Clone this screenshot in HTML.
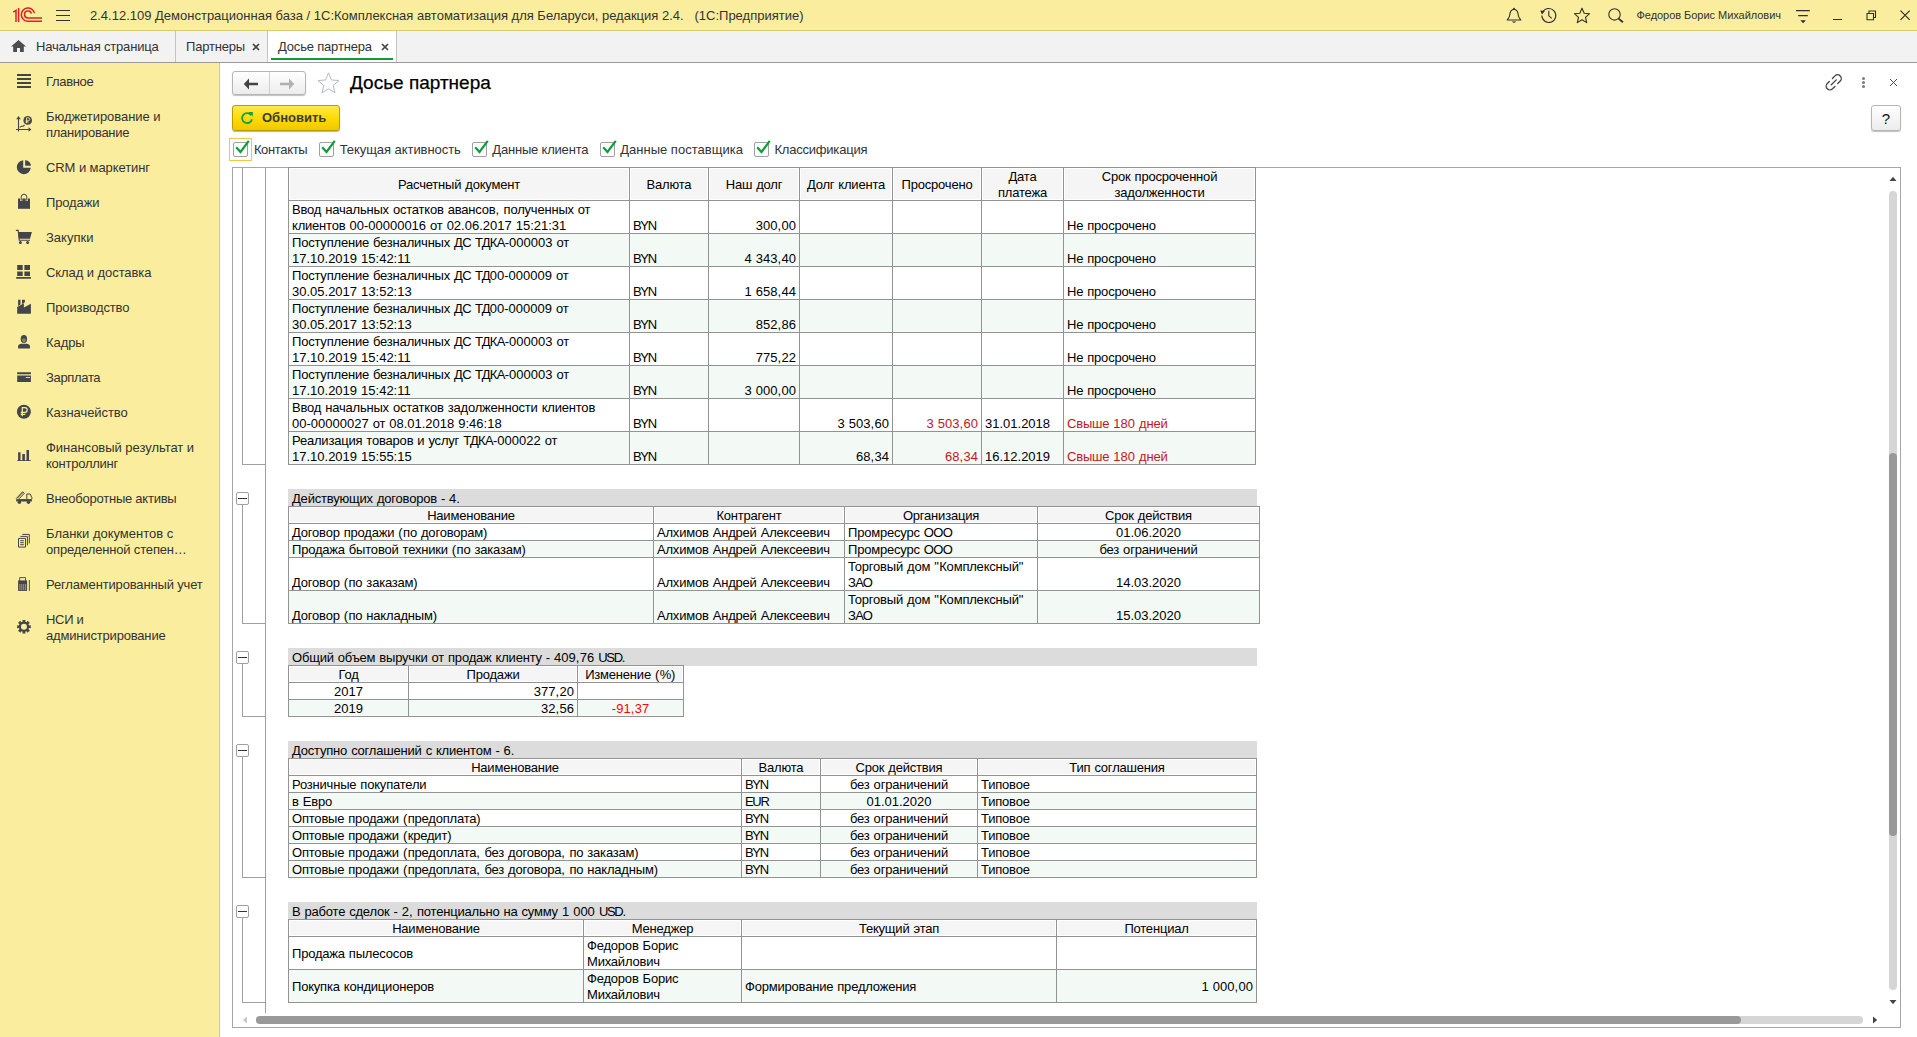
<!DOCTYPE html><html><head><meta charset="utf-8"><title>Досье партнера</title><style>
*{box-sizing:border-box;margin:0;padding:0}
html,body{width:1917px;height:1037px;overflow:hidden;background:#fff;font-family:"Liberation Sans",sans-serif;color:#333}
.abs{position:absolute}
#top{position:absolute;left:0;top:0;width:1917px;height:30px;background:#fbed9e}
#topline{position:absolute;left:0;top:30px;width:1917px;height:1px;background:#d9c977}
#tabs{position:absolute;left:0;top:31px;width:1917px;height:31px;background:#f2f2f2}
#tabsline{position:absolute;left:0;top:62px;width:1917px;height:1px;background:#9a9a9a}
#side{position:absolute;left:0;top:63px;width:219px;height:974px;background:#fbed9e}
#sideline{position:absolute;left:219px;top:63px;width:1px;height:974px;background:#d9cb82}
.t13{font-size:13px;line-height:15px;white-space:nowrap;color:#333}
.tab{position:absolute;top:31px;height:31px;font-size:13px;line-height:31px;white-space:nowrap;color:#333;letter-spacing:-0.18px}
.tabsep{position:absolute;top:31px;width:1px;height:31px;background:#c3c3c3}
.si{position:absolute;left:46px;font-size:13px;line-height:16px;color:#333;white-space:nowrap;}
.ico{position:absolute}
.sheet{position:absolute;font-size:13px;color:#000}
table{border-collapse:collapse;position:absolute;table-layout:fixed;font-size:13px;color:#000}
td{border:1px solid #939393;padding:0 0 0 3px;vertical-align:bottom;line-height:16px;white-space:nowrap;overflow:hidden;letter-spacing:-0.2px;word-spacing:0.6px}
.i{position:relative;top:1px}
.n{letter-spacing:0;word-spacing:0.4px}
.p{letter-spacing:0.45px}
.u{letter-spacing:-0.7px}
.ul{letter-spacing:-1.3px}
td.h{background:#f5f5f5;text-align:center;padding:0;vertical-align:middle;box-shadow:inset 0 0 0 1px #fff}
td.r{text-align:right;padding:0 3px 0 0}
td.c{text-align:center;padding:0}
td.m{vertical-align:middle}
tr.a td{background:#f3faf5}
tr.a td.h{background:#f5f5f5}
.red{color:#c4161c}
.red2{color:#ff0000}
.band{position:absolute;left:288px;height:18px;background:#dcdcdc;font-size:13px;line-height:17px;padding:1px 0 0 4px;white-space:nowrap;color:#000;letter-spacing:-0.2px;word-spacing:0.6px;overflow:hidden}
.vl{position:absolute;width:1px;background:#a0a0a0}
.hl{position:absolute;height:1px;background:#a0a0a0}
.box{position:absolute;left:236px;width:13px;height:13px;border:1px solid #a0a0a0;border-radius:2px;background:#fff}
.box:after{content:"";position:absolute;left:1px;top:5px;width:9px;height:1px;background:#333}
.cb{position:absolute;top:142px;width:15px;height:15px;border:1px solid #a0a0a0;border-radius:2px;background:#fff}
.cbl{position:absolute;top:141px;font-size:13px;line-height:17px;color:#333;white-space:nowrap}
</style></head><body>
<div id="top"></div><div id="topline"></div><div id="tabs"></div><div id="tabsline"></div>
<svg class="ico" style="left:12px;top:7px" width="32" height="16" viewBox="0 0 32 16">
<g fill="none" stroke="#e31e24" stroke-width="1.5">
<path d="M1.2 5.2 L4 3.4 L4 15"/><path d="M6.6 1 L6.6 15"/>
<path d="M30 14.2 L16 14.2 A6.6 6.6 0 1 1 22.4 6.2"/>
<path d="M30 11 L16.2 11 A3.5 3.5 0 1 1 19.4 6.6"/>
</g></svg>
<div class="abs" style="left:56px;top:10px;width:14px;height:1px;background:#333;box-shadow:0 5px 0 #333,0 10px 0 #333"></div>
<div class="abs t13" style="left:90px;top:8px">2.4.12.109 Демонстрационная база / 1С:Комплексная автоматизация для Беларуси, редакция 2.4.&nbsp;&nbsp; (1С:Предприятие)</div>
<svg class="ico" style="left:1502px;top:4px" width="24" height="24" viewBox="1502 4 24 24"><path d="M1514 9.2c-3.2.3-4 3-4.2 5.6-.2 2.6-1.4 3.6-2.6 5.2h13.6c-1.2-1.6-2.4-2.6-2.6-5.2-.2-2.600-1-5.300-4.200-5.600z" fill="none" stroke="#2e2e2e" stroke-width="1.1" stroke-linejoin="round"/><circle cx="1514" cy="8.600" r="0.9" fill="#2e2e2e"/><path d="M1511.6 21.4h4.800l-2.400 1.700z" fill="#2e2e2e"/></svg>
<svg class="ico" style="left:1536px;top:4px" width="24" height="24" viewBox="1536 4 24 24"><g fill="none" stroke="#2e2e2e" stroke-width="1.1"><path d="M1542.600 12.200a7 7 0 1 1 -.8 3.400"/><path d="M1548.800 10.800v5l3 2.600"/></g><path d="M1540.200 10.600l4.600.4-2.800 3.600z" fill="#2e2e2e"/></svg>
<svg class="ico" style="left:1570px;top:4px" width="24" height="24" viewBox="1570 4 24 24"><path d="M1582 8.200l2.200 5 5.400.5-4.100 3.600 1.200 5.300-4.700-2.800-4.700 2.800 1.200-5.300-4.100-3.600 5.400-.5z" fill="none" stroke="#2e2e2e" stroke-width="1.1" stroke-linejoin="round"/></svg>
<svg class="ico" style="left:1604px;top:4px" width="24" height="24" viewBox="1604 4 24 24"><circle cx="1614.500" cy="14.400" r="5.700" fill="none" stroke="#2e2e2e" stroke-width="1.1"/><path d="M1618.600 18.600l4.300 3.700" stroke="#2e2e2e" stroke-width="1.800"/></svg>
<div class="abs" style="left:1636.500px;top:8px;font-size:11px;line-height:15px;color:#333;white-space:nowrap;letter-spacing:-0.039px">Федоров Борис Михайлович</div>
<svg class="ico" style="left:1792px;top:6px" width="22" height="20" viewBox="1792 6 22 20"><path d="M1796 10.600h13.800M1798.200 15.600h9.600" stroke="#2e2e2e" stroke-width="1.100" fill="none"/><path d="M1800.300 20.200h5.600l-2.800 3z" fill="#2e2e2e"/></svg>
<div class="abs" style="left:1833px;top:19px;width:9px;height:1px;background:#2e2e2e"></div>
<svg class="ico" style="left:1864px;top:8px" width="14" height="14" viewBox="1864 8 14 14"><path d="M1867 13.500h6.500v6.300h-6.500z M1869 13.500v-2.500h6.500v6.500h-2" fill="none" stroke="#2e2e2e" stroke-width="1.100"/></svg>
<svg class="ico" style="left:1898px;top:8px" width="14" height="14" viewBox="1898 8 14 14"><path d="M1900.500 10.600l9.200 9.200M1909.700 10.600l-9.200 9.200" stroke="#2e2e2e" stroke-width="1.200"/></svg>
<svg class="ico" style="left:11px;top:40px" width="15" height="13" viewBox="0 0 15 13"><path d="M7.5 0 L15 6.5 L12.8 6.5 L12.8 12 L9 12 L9 8 L6 8 L6 12 L2.2 12 L2.2 6.5 L0 6.5Z" fill="#4d4d4d"/></svg>
<div class="abs" style="left:268px;top:31px;width:128px;height:31px;background:#fff"></div>
<div class="tab" style="left:36px">Начальная страница</div>
<div class="tabsep" style="left:175px"></div>
<div class="tab" style="left:186px">Партнеры</div>
<svg class="ico" style="left:252px;top:43px" width="8" height="8" viewBox="0 0 8 8"><path d="M1 1L7 7M7 1L1 7" stroke="#454545" stroke-width="1.7"/></svg>
<div class="tabsep" style="left:267px"></div>
<div class="tab" style="left:278px">Досье партнера</div>
<svg class="ico" style="left:381px;top:43px" width="8" height="8" viewBox="0 0 8 8"><path d="M1 1L7 7M7 1L1 7" stroke="#454545" stroke-width="1.7"/></svg>
<div class="abs" style="left:271px;top:58px;width:122px;height:2px;background:#0f9d3a"></div>
<div class="tabsep" style="left:396px"></div>
<div id="side"></div><div id="sideline"></div>
<div class="si" style="top:74px;letter-spacing:-0.329px">Главное</div>
<div class="si" style="top:109px;letter-spacing:-0.053px">Бюджетирование и</div>
<div class="si" style="top:125px;letter-spacing:-0.266px">планирование</div>
<div class="si" style="top:160px;letter-spacing:-0.083px">CRM и маркетинг</div>
<div class="si" style="top:195px;letter-spacing:-0.133px">Продажи</div>
<div class="si" style="top:230px;letter-spacing:-0.001px">Закупки</div>
<div class="si" style="top:265px;letter-spacing:-0.072px">Склад и доставка</div>
<div class="si" style="top:300px;letter-spacing:-0.115px">Производство</div>
<div class="si" style="top:335px;letter-spacing:-0.067px">Кадры</div>
<div class="si" style="top:370px;letter-spacing:-0.332px">Зарплата</div>
<div class="si" style="top:405px;letter-spacing:-0.059px">Казначейство</div>
<div class="si" style="top:440px;letter-spacing:-0.036px">Финансовый результат и</div>
<div class="si" style="top:456px;letter-spacing:-0.243px">контроллинг</div>
<div class="si" style="top:491px;letter-spacing:-0.240px">Внеоборотные активы</div>
<div class="si" style="top:526px;letter-spacing:-0.009px">Бланки документов с</div>
<div class="si" style="top:542px;letter-spacing:-0.173px">определенной степен…</div>
<div class="si" style="top:577px;letter-spacing:-0.155px">Регламентированный учет</div>
<div class="si" style="top:612px;letter-spacing:-0.300px">НСИ и</div>
<div class="si" style="top:628px;letter-spacing:-0.177px">администрирование</div>
<svg class="ico" style="left:14px;top:70px" width="20" height="22" viewBox="14 70 20 22"><path d="M17 74h14v2h-14z M17 78h14v2h-14z M17 82h14v2h-14z M17 86h14v2h-14z" fill="#43454c"/></svg>
<svg class="ico" style="left:14px;top:112px" width="20" height="22" viewBox="14 112 20 22"><g fill="none" stroke="#43454c" stroke-width="1.1"><path d="M18.5 131.5V117.5M16 129.5H30"/><path d="M19.8 127.4l1.6-1.2h1.6l1.6-1.2"/></g><path d="M16.2 119.2L18.5 116l2.3 3.2zM28.6 127.2L31.4 129.5l-2.8 2.3z" fill="#43454c"/><circle cx="27.7" cy="120.4" r="4.3" fill="#43454c"/><path d="M26.6 123.2v-5.4h1.6a1.5 1.5 0 0 1 0 3h-2.6M25.6 122.1h3" fill="none" stroke="#fbed9e" stroke-width="0.9"/></svg>
<svg class="ico" style="left:14px;top:158px" width="20" height="20" viewBox="14 158 20 20"><path d="M23.2 160.2A7 7 0 1 0 30.8 167.8L23.2 167.8Z" fill="#43454c"/><path d="M25.2 159.9A7 7 0 0 1 31 165.7L25.2 165.7Z" fill="#43454c"/></svg>
<svg class="ico" style="left:14px;top:192px" width="20" height="20" viewBox="14 192 20 20"><path d="M18 198.5h12v10.3h-12z" fill="#43454c"/><path d="M21.2 201v-4a2.8 2.8 0 0 1 5.6 0v4" fill="none" stroke="#fbed9e" stroke-width="2.2"/><path d="M21.2 200.6v-3.6a2.8 2.8 0 0 1 5.6 0v3.6" fill="none" stroke="#43454c" stroke-width="1"/></svg>
<svg class="ico" style="left:14px;top:228px" width="20" height="18" viewBox="14 228 20 18"><path d="M18.1 232h13.8l-1.9 6.8h-10.9z" fill="#43454c"/><path d="M15.9 230.4h2.3l1 9.8h10.8" fill="none" stroke="#43454c" stroke-width="1.1"/><circle cx="20.4" cy="242.4" r="1.5" fill="#43454c"/><circle cx="27.6" cy="242.4" r="1.5" fill="#43454c"/></svg>
<svg class="ico" style="left:14px;top:262px" width="20" height="20" viewBox="14 262 20 20"><path d="M17.2 265h5.5v5h-5.5zM24.4 265h5.6v5h-5.6zM17.2 271.5h5.5v4.5h-5.5zM24.4 271.5h5.6v4.5h-5.6zM16.2 277.1h14.7v1.7h-14.7z" fill="#43454c"/></svg>
<svg class="ico" style="left:14px;top:297px" width="20" height="20" viewBox="14 297 20 20"><path d="M17.2 313.7V307l6.7-3.8v4.3l7-3.8v10zM18.1 299.8h2.4v4.8l-2.4 1.4zM22 299.8h2.9v2.4l-2.9 1.7z" fill="#43454c"/></svg>
<svg class="ico" style="left:14px;top:332px" width="20" height="20" viewBox="14 332 20 20"><ellipse cx="23.9" cy="339" rx="3.2" ry="3.9" fill="#43454c"/><path d="M18.1 348.6v-2.2c0-1.8 1.6-2.6 3.4-2.6h4.9c1.8 0 3.6.8 3.6 2.6v2.2z" fill="#43454c"/><path d="M22 339.3c.6-1 3.2-1 3.8 0 0 2-.8 3.2-1.9 3.2s-1.9-1.2-1.9-3.2z" fill="#8a8468"/></svg>
<svg class="ico" style="left:14px;top:368px" width="20" height="18" viewBox="14 368 20 18"><path d="M17.2 372.2h13.7v2h-13.7zM17.2 375.6h13.7v6.3h-13.7z" fill="#43454c"/><path d="M25.8 377h4.2v.9h-4.2z" fill="#fbed9e"/></svg>
<svg class="ico" style="left:14px;top:402px" width="20" height="20" viewBox="14 402 20 20"><circle cx="23.9" cy="411.7" r="7" fill="#43454c"/><path d="M22.3 416.3v-8.6h2.6a2.3 2.3 0 0 1 0 4.6h-4.2M20.7 414.4h4.6" fill="none" stroke="#fbed9e" stroke-width="1.2"/></svg>
<svg class="ico" style="left:14px;top:447px" width="20" height="18" viewBox="14 447 20 18"><path d="M18.1 452.2h2.4v8.1h-2.4zM22.3 454.1h2.6v6.2h-2.6zM26.5 450.1h2.5v10.2h-2.5zM17.2 460.3h13.7v.8h-13.7z" fill="#43454c"/></svg>
<svg class="ico" style="left:14px;top:488px" width="20" height="20" viewBox="14 488 20 20"><path d="M16.2 499.1h15.7v2.4h-15.7z" fill="#43454c"/><circle cx="19.4" cy="502.3" r="1.7" fill="#43454c"/><circle cx="28.5" cy="502.3" r="1.7" fill="#43454c"/><path d="M26.8 499v-5h3.4l1.7 3.7v1.4" fill="none" stroke="#43454c" stroke-width="1"/><path d="M16.2 498.6l6.3-6.8 1.8 1.5-5.4 5.6" fill="none" stroke="#43454c" stroke-width="1"/><path d="M17.3 498.3l6-6.2" fill="none" stroke="#43454c" stroke-width="0.9"/></svg>
<svg class="ico" style="left:14px;top:532px" width="20" height="18" viewBox="14 532 20 18"><g fill="none" stroke="#43454c" stroke-width="1"><path d="M18.5 538.4h7v8.7h-7z"/><path d="M20.4 536.4h7v9M22.3 534.4h7v9"/><path d="M20.2 540.7h3.6M20.2 542.7h3.6M20.2 544.7h3.6"/></g></svg>
<svg class="ico" style="left:14px;top:575px" width="20" height="18" viewBox="14 575 20 18"><path d="M18.1 580.4h9v10.5h-9z" fill="#43454c"/><path d="M19.7 577.6h5.8v3.3h-5.8z" fill="#fbed9e" stroke="#43454c" stroke-width="0.9"/><g fill="#fbed9e"><path d="M19.4 584.6h1v1h-1zM21.3 584.6h1v1h-1zM23.2 584.6h1v1h-1zM25.1 584.6h1v1h-1zM19.4 586.6h1v1h-1zM21.3 586.6h1v1h-1zM23.2 586.6h1v1h-1zM25.1 586.6h1v1h-1zM19.4 588.6h1v1h-1zM21.3 588.6h1v1h-1zM23.2 588.6h1v1h-1zM25.1 588.6h1v1h-1z"/></g><path d="M29.4 580v10.9" stroke="#43454c" stroke-width="0.9"/></svg>
<svg class="ico" style="left:14px;top:617px" width="20" height="20" viewBox="14 617 20 20"><path d="M22.38 619.88L25.52 619.88L25.25 621.67L26.59 622.22L27.66 620.76L29.89 622.99L28.43 624.06L28.98 625.40L30.77 625.13L30.77 628.27L28.98 628.00L28.43 629.34L29.89 630.41L27.66 632.64L26.59 631.18L25.25 631.73L25.52 633.52L22.38 633.52L22.65 631.73L21.31 631.18L20.24 632.64L18.01 630.41L19.47 629.34L18.92 628.00L17.13 628.27L17.13 625.13L18.92 625.40L19.47 624.06L18.01 622.99L20.24 620.76L21.31 622.22L22.65 621.67Z M26.95 626.7a3 3 0 1 0 -6 0a3 3 0 1 0 6 0Z" fill="#43454c" fill-rule="evenodd"/></svg>
<div class="abs" style="left:232px;top:71px;width:74px;height:24px;border:1px solid #b5b5b5;border-radius:3px;background:linear-gradient(#fff,#ececec);box-shadow:0 1px 1px rgba(0,0,0,.25)"></div>
<div class="abs" style="left:269px;top:72px;width:1px;height:22px;background:#d0d0d0"></div>
<svg class="ico" style="left:243px;top:77.600px" width="16" height="12" viewBox="0 0 16 12"><path d="M6 0.5 L0.8 6 L6 11.5 L6 7.3 L15 7.3 L15 4.7 L6 4.7Z" fill="#444"/></svg>
<svg class="ico" style="left:279px;top:77.600px" width="16" height="12" viewBox="0 0 16 12"><path d="M10 0.5 L15.2 6 L10 11.5 L10 7.3 L1 7.3 L1 4.7 L10 4.7Z" fill="#b0b0b0"/></svg>
<svg class="ico" style="left:316px;top:71px" width="25" height="24" viewBox="0 0 25 24"><path d="M12.5 1.8 L15.4 9 L23 9.5 L17.2 14.4 L19 21.9 L12.5 17.8 L6 21.9 L7.8 14.4 L2 9.5 L9.6 9Z" fill="#fff" stroke="#b4bcc4" stroke-width="1"/></svg>
<div class="abs" style="left:350px;top:71px;font-size:19px;line-height:24px;color:#000;white-space:nowrap;-webkit-text-stroke:0.25px #000">Досье партнера</div>
<svg class="ico" style="left:1822px;top:71px" width="24" height="24" viewBox="1822 71 24 24"><g transform="translate(1833.75,82.35) rotate(-45)" fill="none" stroke="#484848" stroke-width="1.4" stroke-linecap="round"><path d="M1.800 -3.700H5.450A3.700 3.700 0 0 1 5.450 3.700H2"/><path d="M-2 3.700H-5.450A3.700 3.700 0 0 1 -5.450 -3.700H-2.600"/><path d="M-3.500 0H3.500"/></g></svg>
<div class="abs" style="left:1862px;top:77px;width:3px;height:3px;border-radius:50%;background:#7d7d7d;box-shadow:0 4px 0 #7d7d7d,0 8px 0 #7d7d7d"></div>
<svg class="ico" style="left:1889px;top:78px" width="9" height="9" viewBox="0 0 9 9"><path d="M1 1 L8 8 M8 1 L1 8" stroke="#4a4a4a" stroke-width="1"/></svg>
<div class="abs" style="left:232px;top:105px;width:108px;height:26px;border:1px solid #b89c00;border-radius:3px;background:linear-gradient(#ffe94a,#ffd900 55%,#f0c800);box-shadow:0 1px 1px rgba(0,0,0,.3)"></div>
<svg class="ico" style="left:240px;top:111px" width="14" height="14" viewBox="0 0 14 14"><path d="M11.2 4.2 A5 5 0 1 0 12 8.2" fill="none" stroke="#1a9f3c" stroke-width="1.8"/><path d="M8.2 1 L12.8 1 L12.8 5.6Z" fill="#1a9f3c"/></svg>
<div class="abs" style="left:262px;top:110px;font-size:13px;line-height:16px;font-weight:bold;color:#3a3a3a;white-space:nowrap">Обновить</div>
<div class="abs" style="left:1871px;top:105px;width:30px;height:26px;border:1px solid #b5b5b5;border-radius:3px;background:linear-gradient(#fff,#ececec);box-shadow:0 1px 1px rgba(0,0,0,.25);text-align:center;font-size:15px;line-height:25px;color:#111">?</div>
<div class="abs" style="left:229px;top:138px;width:23px;height:23px;border:1px solid #f2c744"></div>
<div class="cb" style="left:233px"></div>
<svg class="ico" style="left:235px;top:140px" width="15" height="15" viewBox="0 0 15 15"><path d="M1.2 7.2 L5.5 12 L13.8 0.8" fill="none" stroke="#0f9d3a" stroke-width="2.2"/></svg>
<div class="cbl" style="left:253.9px;letter-spacing:-0.351px">Контакты</div>
<div class="cb" style="left:319px"></div>
<svg class="ico" style="left:321px;top:140px" width="15" height="15" viewBox="0 0 15 15"><path d="M1.2 7.2 L5.5 12 L13.8 0.8" fill="none" stroke="#0f9d3a" stroke-width="2.2"/></svg>
<div class="cbl" style="left:339.7px;letter-spacing:-0.058px">Текущая активность</div>
<div class="cb" style="left:472px"></div>
<svg class="ico" style="left:474px;top:140px" width="15" height="15" viewBox="0 0 15 15"><path d="M1.2 7.2 L5.5 12 L13.8 0.8" fill="none" stroke="#0f9d3a" stroke-width="2.2"/></svg>
<div class="cbl" style="left:492.3px;letter-spacing:-0.194px">Данные клиента</div>
<div class="cb" style="left:600px"></div>
<svg class="ico" style="left:602px;top:140px" width="15" height="15" viewBox="0 0 15 15"><path d="M1.2 7.2 L5.5 12 L13.8 0.8" fill="none" stroke="#0f9d3a" stroke-width="2.2"/></svg>
<div class="cbl" style="left:620.2px;letter-spacing:0.015px">Данные поставщика</div>
<div class="cb" style="left:754px"></div>
<svg class="ico" style="left:756px;top:140px" width="15" height="15" viewBox="0 0 15 15"><path d="M1.2 7.2 L5.5 12 L13.8 0.8" fill="none" stroke="#0f9d3a" stroke-width="2.2"/></svg>
<div class="cbl" style="left:774.4px;letter-spacing:-0.205px">Классификация</div>
<div class="abs" style="left:232px;top:167px;width:1669px;height:861px;border:1px solid #a6a6a6"></div>
<div class="vl" style="left:242px;top:168px;height:296px"></div>
<div class="hl" style="left:242px;top:464px;width:23px"></div>
<div class="vl" style="left:265px;top:168px;height:845px"></div>
<table style="left:288px;top:167px;width:968px"><colgroup><col style="width:341px"><col style="width:79px"><col style="width:91px"><col style="width:93px"><col style="width:89px"><col style="width:82px"><col style="width:192px"></colgroup><tr class="" style="height:33px"><td class="h"><div class="i">Расчетный документ</div></td><td class="h"><div class="i">Валюта</div></td><td class="h"><div class="i">Наш долг</div></td><td class="h"><div class="i">Долг клиента</div></td><td class="h"><div class="i">Просрочено</div></td><td class="h"><div class="i">Дата<br>платежа</div></td><td class="h"><div class="i">Срок просроченной<br>задолженности</div></td></tr><tr class="" style="height:33px"><td class=""><div class="i">Ввод начальных остатков авансов<span class="p">,</span> полученных от<br>клиентов <span class="n">00-00000016</span> от <span class="n">02.06.2017 15:21:31</span></div></td><td class=""><div class="i"><span class="ul">BYN</span></div></td><td class="r"><div class="i"><span class="n">300</span><span class="p">,</span><span class="n">00</span></div></td><td class="r"></td><td class="r"></td><td class=""></td><td class=""><div class="i">Не просрочено</div></td></tr><tr class="a" style="height:33px"><td class=""><div class="i">Поступление безналичных <span class="u">ДС</span> <span class="u">ТДКА</span><span class="n">-000003</span> от<br><span class="n">17.10.2019 15:42:11</span></div></td><td class=""><div class="i"><span class="ul">BYN</span></div></td><td class="r"><div class="i"><span class="n">4 343</span><span class="p">,</span><span class="n">40</span></div></td><td class="r"></td><td class="r"></td><td class=""></td><td class=""><div class="i">Не просрочено</div></td></tr><tr class="" style="height:33px"><td class=""><div class="i">Поступление безналичных <span class="u">ДС</span> <span class="u">ТД</span><span class="n">00-000009</span> от<br><span class="n">30.05.2017 13:52:13</span></div></td><td class=""><div class="i"><span class="ul">BYN</span></div></td><td class="r"><div class="i"><span class="n">1 658</span><span class="p">,</span><span class="n">44</span></div></td><td class="r"></td><td class="r"></td><td class=""></td><td class=""><div class="i">Не просрочено</div></td></tr><tr class="a" style="height:33px"><td class=""><div class="i">Поступление безналичных <span class="u">ДС</span> <span class="u">ТД</span><span class="n">00-000009</span> от<br><span class="n">30.05.2017 13:52:13</span></div></td><td class=""><div class="i"><span class="ul">BYN</span></div></td><td class="r"><div class="i"><span class="n">852</span><span class="p">,</span><span class="n">86</span></div></td><td class="r"></td><td class="r"></td><td class=""></td><td class=""><div class="i">Не просрочено</div></td></tr><tr class="" style="height:33px"><td class=""><div class="i">Поступление безналичных <span class="u">ДС</span> <span class="u">ТДКА</span><span class="n">-000003</span> от<br><span class="n">17.10.2019 15:42:11</span></div></td><td class=""><div class="i"><span class="ul">BYN</span></div></td><td class="r"><div class="i"><span class="n">775</span><span class="p">,</span><span class="n">22</span></div></td><td class="r"></td><td class="r"></td><td class=""></td><td class=""><div class="i">Не просрочено</div></td></tr><tr class="a" style="height:33px"><td class=""><div class="i">Поступление безналичных <span class="u">ДС</span> <span class="u">ТДКА</span><span class="n">-000003</span> от<br><span class="n">17.10.2019 15:42:11</span></div></td><td class=""><div class="i"><span class="ul">BYN</span></div></td><td class="r"><div class="i"><span class="n">3 000</span><span class="p">,</span><span class="n">00</span></div></td><td class="r"></td><td class="r"></td><td class=""></td><td class=""><div class="i">Не просрочено</div></td></tr><tr class="" style="height:33px"><td class=""><div class="i">Ввод начальных остатков задолженности клиентов<br><span class="n">00-00000027</span> от <span class="n">08.01.2018 9:46:18</span></div></td><td class=""><div class="i"><span class="ul">BYN</span></div></td><td class="r"></td><td class="r"><div class="i"><span class="n">3 503</span><span class="p">,</span><span class="n">60</span></div></td><td class="r red"><div class="i"><span class="n">3 503</span><span class="p">,</span><span class="n">60</span></div></td><td class=""><div class="i"><span class="n">31.01.2018</span></div></td><td class="red"><div class="i">Свыше <span class="n">180</span> дней</div></td></tr><tr class="a" style="height:33px"><td class=""><div class="i">Реализация товаров и услуг <span class="u">ТДКА</span><span class="n">-000022</span> от<br><span class="n">17.10.2019 15:55:15</span></div></td><td class=""><div class="i"><span class="ul">BYN</span></div></td><td class="r"></td><td class="r"><div class="i"><span class="n">68</span><span class="p">,</span><span class="n">34</span></div></td><td class="r red"><div class="i"><span class="n">68</span><span class="p">,</span><span class="n">34</span></div></td><td class=""><div class="i"><span class="n">16.12.2019</span></div></td><td class="red"><div class="i">Свыше <span class="n">180</span> дней</div></td></tr></table>
<div class="band" style="top:489px;width:969px">Действующих договоров - <span class="n">4</span>.</div>
<div class="box" style="top:492px"></div>
<div class="vl" style="left:242px;top:505px;height:118px"></div><div class="hl" style="left:242px;top:623px;width:23px"></div>
<table style="left:288px;top:506px;width:972px"><colgroup><col style="width:365px"><col style="width:191px"><col style="width:193px"><col style="width:222px"></colgroup><tr class="" style="height:17px"><td class="h"><div class="i">Наименование</div></td><td class="h"><div class="i">Контрагент</div></td><td class="h"><div class="i">Организация</div></td><td class="h"><div class="i">Срок действия</div></td></tr><tr class="" style="height:17px"><td class=""><div class="i">Договор продажи <span class="p">(</span>по договорам<span class="p">)</span></div></td><td class=""><div class="i">Алхимов Андрей Алексеевич</div></td><td class=""><div class="i">Промресурс <span class="u">ООО</span></div></td><td class="c"><div class="i"><span class="n">01.06.2020</span></div></td></tr><tr class="a" style="height:17px"><td class=""><div class="i">Продажа бытовой техники <span class="p">(</span>по заказам<span class="p">)</span></div></td><td class=""><div class="i">Алхимов Андрей Алексеевич</div></td><td class=""><div class="i">Промресурс <span class="u">ООО</span></div></td><td class="c"><div class="i">без ограничений</div></td></tr><tr class="" style="height:33px"><td class=""><div class="i">Договор <span class="p">(</span>по заказам<span class="p">)</span></div></td><td class=""><div class="i">Алхимов Андрей Алексеевич</div></td><td class=""><div class="i">Торговый дом <span class="p">"</span>Комплексный<span class="p">"</span><br><span class="u">ЗАО</span></div></td><td class="c"><div class="i"><span class="n">14.03.2020</span></div></td></tr><tr class="a" style="height:33px"><td class=""><div class="i">Договор <span class="p">(</span>по накладным<span class="p">)</span></div></td><td class=""><div class="i">Алхимов Андрей Алексеевич</div></td><td class=""><div class="i">Торговый дом <span class="p">"</span>Комплексный<span class="p">"</span><br><span class="u">ЗАО</span></div></td><td class="c"><div class="i"><span class="n">15.03.2020</span></div></td></tr></table>
<div class="band" style="top:648px;width:969px">Общий объем выручки от продаж клиенту - <span class="n">409</span><span class="p">,</span><span class="n">76</span> <span class="ul">USD</span>.</div>
<div class="box" style="top:651px"></div>
<div class="vl" style="left:242px;top:664px;height:52px"></div><div class="hl" style="left:242px;top:716px;width:23px"></div>
<table style="left:288px;top:665px;width:396px"><colgroup><col style="width:120px"><col style="width:169px"><col style="width:106px"></colgroup><tr class="" style="height:17px"><td class="h"><div class="i">Год</div></td><td class="h"><div class="i">Продажи</div></td><td class="h"><div class="i">Изменение <span class="p">(</span>%<span class="p">)</span></div></td></tr><tr class="" style="height:17px"><td class="c"><div class="i"><span class="n">2017</span></div></td><td class="r"><div class="i"><span class="n">377</span><span class="p">,</span><span class="n">20</span></div></td><td class=""></td></tr><tr class="a" style="height:17px"><td class="c"><div class="i"><span class="n">2019</span></div></td><td class="r"><div class="i"><span class="n">32</span><span class="p">,</span><span class="n">56</span></div></td><td class="c red2"><div class="i"><span class="n">-91</span><span class="p">,</span><span class="n">37</span></div></td></tr></table>
<div class="band" style="top:741px;width:969px">Доступно соглашений с клиентом - <span class="n">6</span>.</div>
<div class="box" style="top:744px"></div>
<div class="vl" style="left:242px;top:757px;height:120px"></div><div class="hl" style="left:242px;top:877px;width:23px"></div>
<table style="left:288px;top:758px;width:969px"><colgroup><col style="width:453px"><col style="width:79px"><col style="width:157px"><col style="width:279px"></colgroup><tr class="" style="height:17px"><td class="h"><div class="i">Наименование</div></td><td class="h"><div class="i">Валюта</div></td><td class="h"><div class="i">Срок действия</div></td><td class="h"><div class="i">Тип соглашения</div></td></tr><tr class="" style="height:17px"><td class=""><div class="i">Розничные покупатели</div></td><td class=""><div class="i"><span class="ul">BYN</span></div></td><td class="c"><div class="i">без ограничений</div></td><td class=""><div class="i">Типовое</div></td></tr><tr class="a" style="height:17px"><td class=""><div class="i">в Евро</div></td><td class=""><div class="i"><span class="ul">EUR</span></div></td><td class="c"><div class="i"><span class="n">01.01.2020</span></div></td><td class=""><div class="i">Типовое</div></td></tr><tr class="" style="height:17px"><td class=""><div class="i">Оптовые продажи <span class="p">(</span>предоплата<span class="p">)</span></div></td><td class=""><div class="i"><span class="ul">BYN</span></div></td><td class="c"><div class="i">без ограничений</div></td><td class=""><div class="i">Типовое</div></td></tr><tr class="a" style="height:17px"><td class=""><div class="i">Оптовые продажи <span class="p">(</span>кредит<span class="p">)</span></div></td><td class=""><div class="i"><span class="ul">BYN</span></div></td><td class="c"><div class="i">без ограничений</div></td><td class=""><div class="i">Типовое</div></td></tr><tr class="" style="height:17px"><td class=""><div class="i">Оптовые продажи <span class="p">(</span>предоплата<span class="p">,</span> без договора<span class="p">,</span> по заказам<span class="p">)</span></div></td><td class=""><div class="i"><span class="ul">BYN</span></div></td><td class="c"><div class="i">без ограничений</div></td><td class=""><div class="i">Типовое</div></td></tr><tr class="a" style="height:17px"><td class=""><div class="i">Оптовые продажи <span class="p">(</span>предоплата<span class="p">,</span> без договора<span class="p">,</span> по накладным<span class="p">)</span></div></td><td class=""><div class="i"><span class="ul">BYN</span></div></td><td class="c"><div class="i">без ограничений</div></td><td class=""><div class="i">Типовое</div></td></tr></table>
<div class="band" style="top:902px;width:969px">В работе сделок - <span class="n">2</span><span class="p">,</span> потенциально на сумму <span class="n">1 000</span> <span class="ul">USD</span>.</div>
<div class="box" style="top:905px"></div>
<div class="vl" style="left:242px;top:918px;height:84px"></div><div class="hl" style="left:242px;top:1002px;width:23px"></div>
<table style="left:288px;top:919px;width:969px"><colgroup><col style="width:295px"><col style="width:158px"><col style="width:315px"><col style="width:200px"></colgroup><tr class="" style="height:17px"><td class="h"><div class="i">Наименование</div></td><td class="h"><div class="i">Менеджер</div></td><td class="h"><div class="i">Текущий этап</div></td><td class="h"><div class="i">Потенциал</div></td></tr><tr class="" style="height:33px"><td class="m"><div class="i">Продажа пылесосов</div></td><td class="m"><div class="i">Федоров Борис<br>Михайлович</div></td><td class="m"></td><td class="r m"></td></tr><tr class="a" style="height:33px"><td class="m"><div class="i">Покупка кондиционеров</div></td><td class="m"><div class="i">Федоров Борис<br>Михайлович</div></td><td class="m"><div class="i">Формирование предложения</div></td><td class="r m"><div class="i"><span class="n">1 000</span><span class="p">,</span><span class="n">00</span></div></td></tr></table>
<div class="abs" style="left:1889px;top:191px;width:8px;height:799px;border-radius:4px;background:#d6d6d6"></div>
<div class="abs" style="left:1889px;top:453px;width:8px;height:383px;border-radius:4px;background:#999"></div>
<svg class="ico" style="left:1889px;top:176px" width="8" height="6" viewBox="0 0 8 6"><path d="M0.5 5 L7.5 5 L4 0.8Z" fill="#444"/></svg>
<svg class="ico" style="left:1889px;top:999px" width="8" height="6" viewBox="0 0 8 6"><path d="M0.5 1 L7.5 1 L4 5.2Z" fill="#444"/></svg>
<div class="abs" style="left:256px;top:1016px;width:1607px;height:8px;border-radius:4px;background:#d6d6d6"></div>
<div class="abs" style="left:256px;top:1016px;width:1485px;height:8px;border-radius:4px;background:#999"></div>
<svg class="ico" style="left:242px;top:1016px" width="6" height="8" viewBox="0 0 6 8"><path d="M5 0.5 L5 7.5 L0.8 4Z" fill="#c8c8c8"/></svg>
<svg class="ico" style="left:1872px;top:1016px" width="6" height="8" viewBox="0 0 6 8"><path d="M1 0.5 L1 7.5 L5.2 4Z" fill="#444"/></svg>
</body></html>
